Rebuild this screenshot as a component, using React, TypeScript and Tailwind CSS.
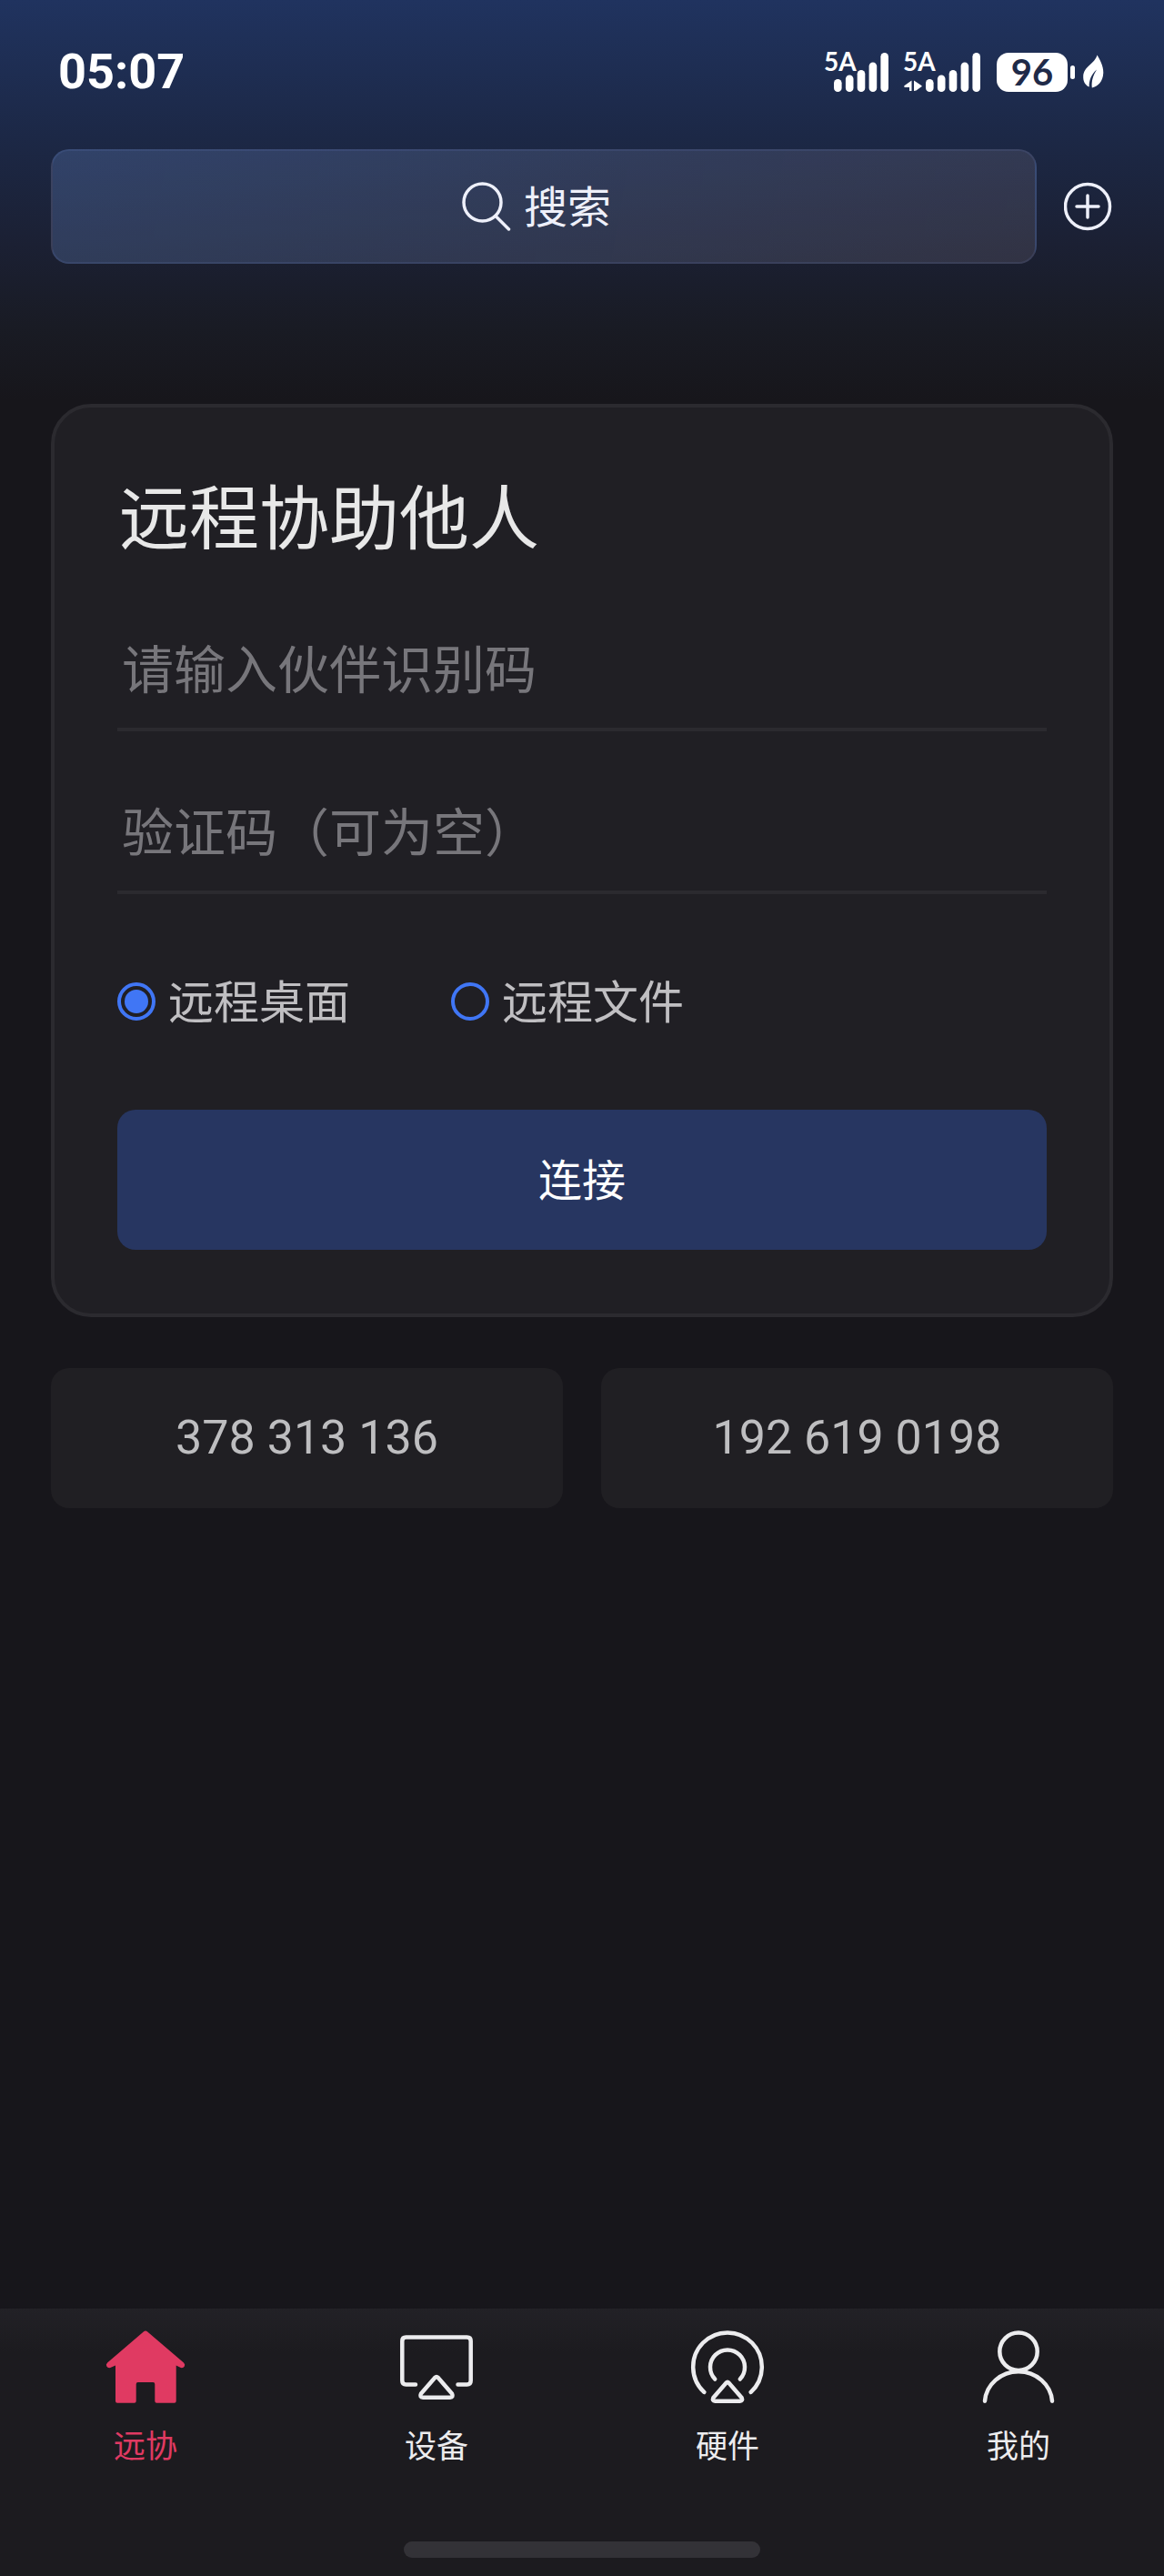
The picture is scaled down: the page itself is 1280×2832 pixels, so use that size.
import { useState } from "react";
import type { ReactNode } from "react";

type Mode = "desktop" | "file";

interface Tab {
  id: string;
  label: string;
  icon: ReactNode;
}

const recentCodes = ["378 313 136", "192 619 0198"];

const modes: { id: Mode; label: string }[] = [
  { id: "desktop", label: "远程桌面" },
  { id: "file", label: "远程文件" },
];

const lineIcon = {
  width: 96,
  height: 84,
  viewBox: "0 0 96 84",
  fill: "none",
  stroke: "currentColor",
  strokeWidth: 4.5,
  strokeLinecap: "round" as const,
  strokeLinejoin: "round" as const,
};

const tabs: Tab[] = [
  {
    id: "assist",
    label: "远协",
    icon: (
      <svg width="96" height="84" viewBox="0 0 96 84" fill="currentColor">
        <path d="M45.8 3.4q2.2-1.8 4.4 0L90 37.6q2 2 .8 3.9-1.200 2.200-4 1.600L81.700 40.500V79.700q0 2-2 2H60.300q-2 0-2-2V61q0-2-2-2H39.700q-2 0-2 2V79.700q0 2-2 2H17q-2 0-2-2V40.500L9.300 43.100q-2.800.6-4-1.600-1.200-1.900.8-3.900z" />
      </svg>
    ),
  },
  {
    id: "devices",
    label: "设备",
    icon: (
      <svg {...lineIcon}>
        <path d="M25 61.500H14.500q-4.200 0-4.200-4.200V13.700q0-4.200 4.200-4.200H81.500q4.200 0 4.200 4.200V57.300q0 4.200-4.200 4.200H71.500" />
        <path d="M46.200 54q1.800-1.700 3.600 0L65 71.500q2 4-2.200 4.300H33.200Q29 75.500 31 71.500z" />
      </svg>
    ),
  },
  {
    id: "hardware",
    label: "硬件",
    icon: (
      <svg {...lineIcon}>
        <path d="M22.300 69.900A37.800 37.800 0 1 1 73.700 69.900" />
        <path d="M34.200 55.500A19 19 0 1 1 61.800 55.500" />
        <path d="M46.500 59.700q1.500-1.500 3 0L63.600 76q1.500 3.500-2 3.800H34.400q-3.500-.3-2-3.800z" />
      </svg>
    ),
  },
  {
    id: "mine",
    label: "我的",
    icon: (
      <svg {...lineIcon}>
        <circle cx="48" cy="25.300" r="20.700" />
        <path d="M11 79.700A37.100 35 0 0 1 85 79.700" />
      </svg>
    ),
  },
];

function SignalBars() {
  return (
    <svg width="60" height="43" viewBox="0 0 60 43" fill="currentColor">
      <rect x="0" y="29" width="8.600" height="14" rx="4.300" />
      <rect x="12.900" y="24.500" width="8.600" height="18.500" rx="4.300" />
      <rect x="25.700" y="19" width="8.600" height="24" rx="4.300" />
      <rect x="38.600" y="10.500" width="8.600" height="32.500" rx="4.300" />
      <rect x="51.400" y="0" width="8.600" height="43" rx="4.300" />
    </svg>
  );
}

function Signal({ data = false }: { data?: boolean }) {
  return (
    <div className={data ? "relative pl-[25px]" : "relative pl-[11px]"}>
      <span className="absolute left-0 top-0 text-[28px] leading-[18px] font-bold">5A</span>
      {data && (
        <svg className="absolute bottom-0 left-px" width="20" height="14" viewBox="0 0 20 14" fill="currentColor">
          <path d="M8.500 1.500v11.500H6V9H1q-1.500-.8-.3-2z" />
          <path d="M11 13V1.500L19.300 7q1 1-.3 1.600L13.500 12.500z" />
        </svg>
      )}
      <SignalBars />
    </div>
  );
}

function StatusBar() {
  return (
    <div className="flex h-16 items-center justify-between pr-2.5 pl-2">
      <time className="font-['Roboto',sans-serif] text-[54px] leading-none font-bold">05:07</time>
      <div className="flex items-center">
        <div className="flex gap-4">
          <Signal />
          <Signal data />
        </div>
        <div className="ml-[18px] flex h-[43px] w-[78px] items-center justify-center rounded-[13px] bg-white text-[40px] leading-none font-bold text-[#1f2a48]">
          96
        </div>
        <div className="ml-[3px] h-[15px] w-[5px] rounded-full bg-white" />
        <svg className="ml-2" width="24" height="38" viewBox="0 0 24 38" fill="currentColor">
          <path d="M16.500.5C19 5 23.500 12 23.300 20 23 30 17 35 10.800 36.500 10 29 12 23 16 16.500 10 22 7.500 28 7.700 35.500 3 33.500 1 29 1.200 24 1.500 13 14 10 16.500.5z" />
        </svg>
      </div>
    </div>
  );
}

export default function App() {
  const [mode, setMode] = useState<Mode>("desktop");
  const [code, setCode] = useState("");
  const [password, setPassword] = useState("");
  const [activeTab, setActiveTab] = useState("assist");

  const inputClass =
    "block h-[134px] w-full border-b-4 border-[#2b2a2f] bg-transparent px-[5px] text-[57px] text-[#e8e8e8] outline-none placeholder:text-[#77767b] placeholder:opacity-100";

  return (
    <div className="flex min-h-screen flex-col bg-[#17161b] bg-[linear-gradient(to_bottom,#20335f_0px,#1c2846_150px,#1b2033_270px,#191b24_360px,#17161b_440px)] font-['Lato','Noto_Sans_CJK_SC',sans-serif] text-white">
      <header className="px-14 pt-[47px]">
        <StatusBar />
        <div className="mt-[53px] flex items-center gap-[30px]">
          <button
            type="button"
            className="flex h-[126px] flex-1 items-center justify-center gap-3.5 rounded-[20px] border-2 border-[#8ea4ff]/10 bg-[linear-gradient(100deg,#6f95d940,#8f849133)] pr-4 text-[48px] text-[#eef0fa]"
          >
            <svg width="54" height="54" viewBox="0 0 54 54" fill="none" stroke="currentColor" strokeWidth="3.500" strokeLinecap="round">
              <circle cx="22.500" cy="22.500" r="20.500" />
              <path d="M37 37.500L51.500 52" />
            </svg>
            搜索
          </button>
          <button type="button" aria-label="添加" className="text-[#eef0fa]">
            <svg width="54" height="54" viewBox="0 0 54 54" fill="none" stroke="currentColor" strokeWidth="3.500" strokeLinecap="round">
              <circle cx="26" cy="27" r="24.500" />
              <path d="M26 15v24M14 27h24" />
            </svg>
          </button>
        </div>
      </header>

      <main className="flex-1 px-14 pt-[154px]">
        {/* 远程协助 */}
        <form
          onSubmit={(e) => e.preventDefault()}
          className="rounded-[44px] border-4 border-[#2b2a2f] bg-[#201f24] px-[69px] pt-[70px] pb-[70px]"
        >
          <h1 className="px-0.5 text-[77px] leading-[100px] text-[#e8e8e8]">远程协助他人</h1>
          <input
            className={`mt-[52px] ${inputClass}`}
            aria-label="伙伴识别码"
            placeholder="请输入伙伴识别码"
            value={code}
            onChange={(e) => setCode(e.target.value)}
          />
          <input
            className={`mt-[45px] ${inputClass}`}
            aria-label="验证码"
            placeholder="验证码（可为空）"
            value={password}
            onChange={(e) => setPassword(e.target.value)}
          />
          <div className="mt-[88px] flex gap-[111px]">
            {modes.map((item) => (
              <label key={item.id} className="flex items-center gap-3.5 text-[50px] leading-[60px] text-[#c0bfc2]">
                <input
                  type="radio"
                  name="mode"
                  checked={mode === item.id}
                  onChange={() => setMode(item.id)}
                  className="grid size-[42px] appearance-none place-content-center rounded-full border-4 border-[#4076f5] before:size-[26px] before:rounded-full checked:before:bg-[#4076f5]"
                />
                {item.label}
              </label>
            ))}
          </div>
          <button type="submit" className="mt-[89px] h-[154px] w-full rounded-[20px] bg-[#273661] text-[48px]">
            连接
          </button>
        </form>

        {/* 最近连接 */}
        <div className="mt-14 grid grid-cols-2 gap-[42px]">
          {recentCodes.map((item) => (
            <button
              key={item}
              type="button"
              onClick={() => setCode(item)}
              className="h-[154px] rounded-[20px] bg-[#201f23] font-['Roboto',sans-serif] text-[52px] text-[#bebec0]"
            >
              {item}
            </button>
          ))}
        </div>
      </main>

      <nav className="bg-[#1c1b1f] bg-[linear-gradient(to_bottom,#222126_0px,#1c1b1f_48px)] pt-[22px] pb-5">
        <div className="grid grid-cols-4">
          {tabs.map((tab) => (
            <a
              key={tab.id}
              href={`#${tab.id}`}
              onClick={() => setActiveTab(tab.id)}
              className={`flex flex-col items-center gap-5 text-[35px] leading-[48px] ${activeTab === tab.id ? "text-[#e03a62]" : "text-[#ececee]"}`}
            >
              {tab.icon}
              {tab.label}
            </a>
          ))}
        </div>
        <div className="mx-auto mt-[82px] h-[18px] w-[392px] rounded-full bg-[#333237]" />
      </nav>
    </div>
  );
}
